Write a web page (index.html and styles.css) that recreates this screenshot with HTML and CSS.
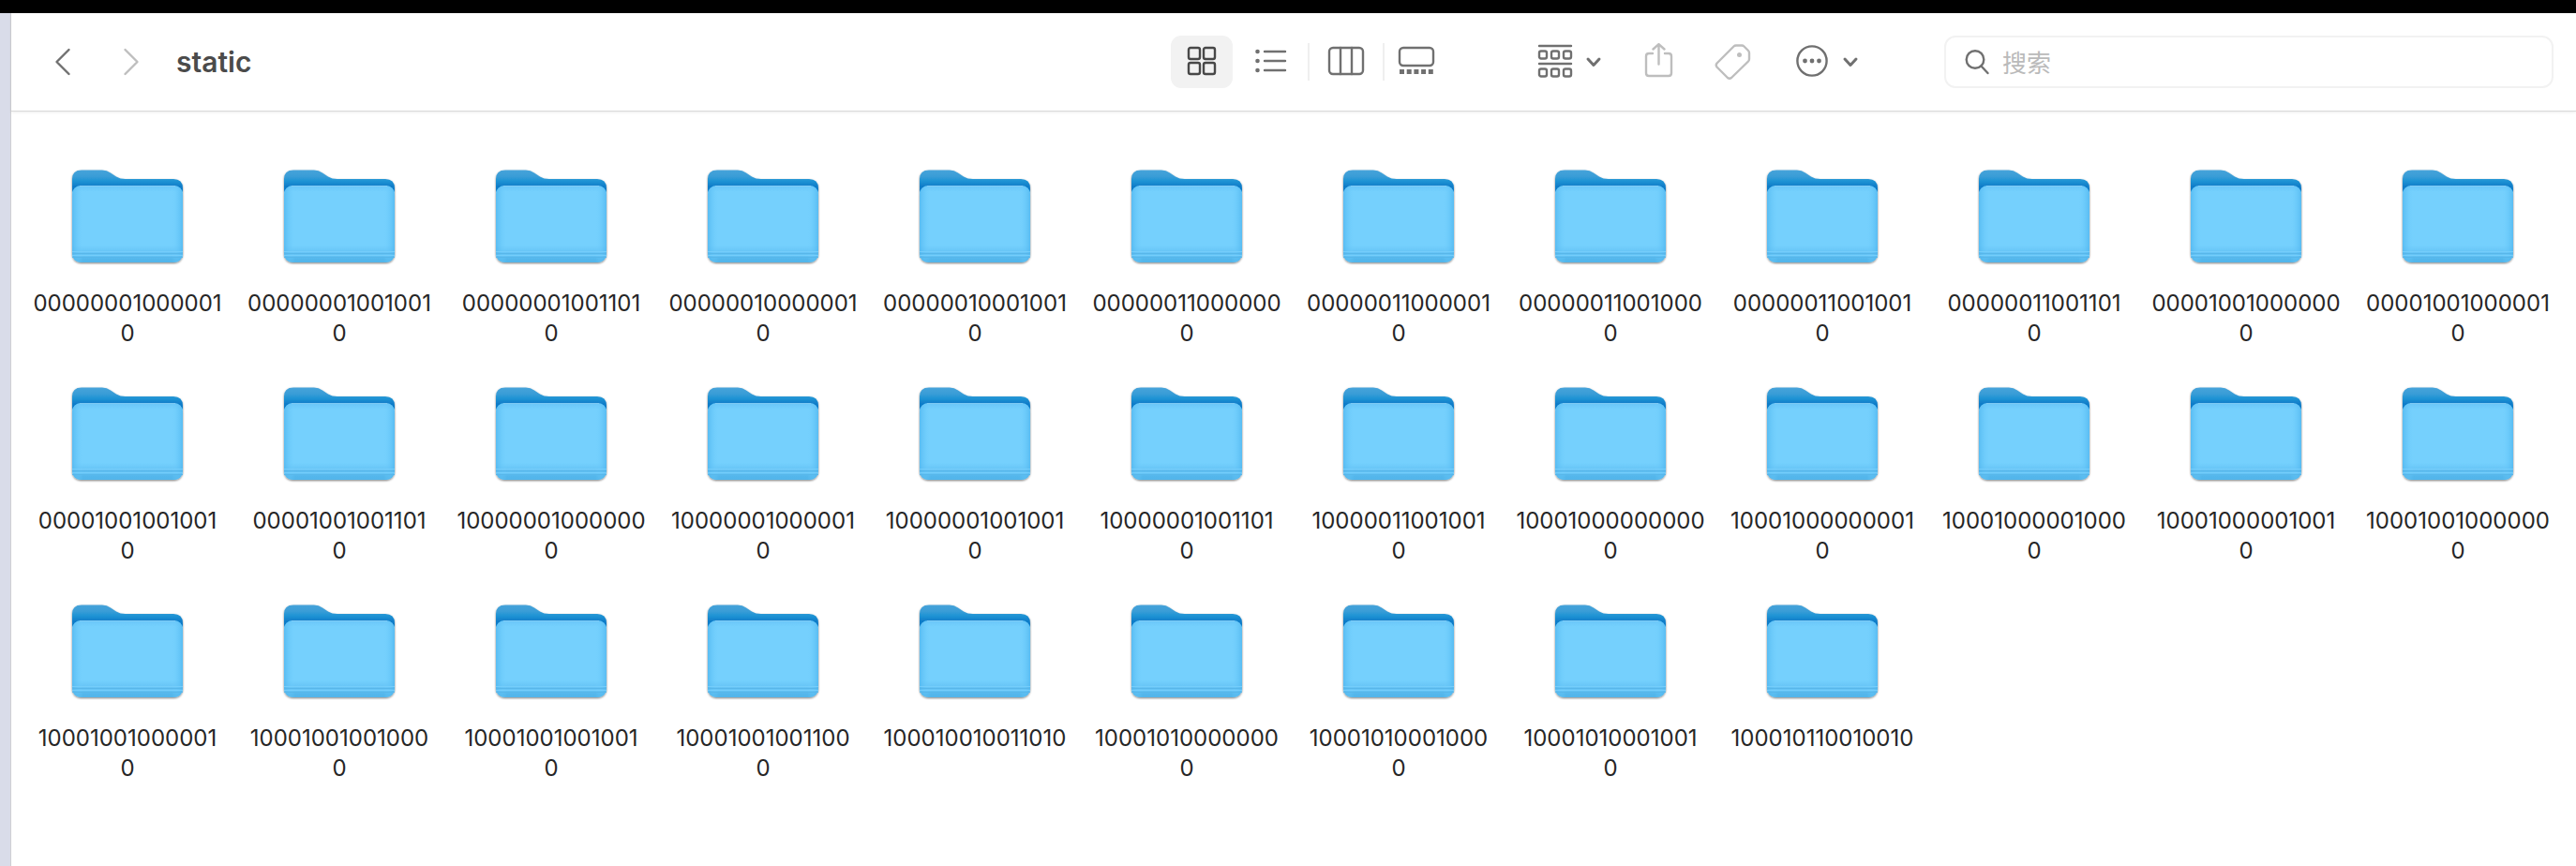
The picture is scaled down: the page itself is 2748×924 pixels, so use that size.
FILE: index.html
```html
<!DOCTYPE html>
<html lang="zh-CN">
<head>
<meta charset="utf-8">
<title>static</title>
<link rel="stylesheet" href="styles.css">
</head>
<body>
<svg class="defs" aria-hidden="true">
  <defs>
    <linearGradient id="back" x1="0" y1="0" x2="0" y2="1">
      <stop offset="0" stop-color="#46a3da"/>
      <stop offset="0.28" stop-color="#3a9dd7"/>
      <stop offset="0.5" stop-color="#1e93d4"/>
      <stop offset="0.75" stop-color="#0d7bc8"/>
      <stop offset="1" stop-color="#0d7bc8"/>
    </linearGradient>
    <linearGradient id="edge" x1="0" y1="0" x2="1" y2="0">
      <stop offset="0" stop-color="#4db4ee" stop-opacity="0.7"/>
      <stop offset="0.04" stop-color="#5fc2f6" stop-opacity="0.5"/>
      <stop offset="0.1" stop-color="#74d0fd" stop-opacity="0"/>
      <stop offset="0.9" stop-color="#74d0fd" stop-opacity="0"/>
      <stop offset="0.96" stop-color="#5fc2f6" stop-opacity="0.5"/>
      <stop offset="1" stop-color="#4db4ee" stop-opacity="0.7"/>
    </linearGradient>
    <linearGradient id="front" x1="0" y1="0" x2="0" y2="1">
      <stop offset="0" stop-color="#6ac6f8"/>
      <stop offset="0.08" stop-color="#74d0fd"/>
      <stop offset="0.78" stop-color="#74d0fd"/>
      <stop offset="0.85" stop-color="#69c6f7"/>
      <stop offset="0.93" stop-color="#60c0f3"/>
      <stop offset="0.95" stop-color="#54b7ec"/>
      <stop offset="1" stop-color="#52b5ea"/>
    </linearGradient>
    <filter id="shade" x="-10%" y="-10%" width="120%" height="120%">
      <feDropShadow dx="0" dy="1" stdDeviation="1" flood-color="#000" flood-opacity="0.5"/>
    </filter>
  </defs>
  <symbol id="folder" viewBox="0 0 130 112">
    <g filter="url(#shade)">
      <path fill="url(#back)" d="M6 30V16Q6 6.500 16 6.500H38Q43 6.500 47 9.500L53 13.500Q57 16 63 16H114Q124 16 124 26V30Z"/>
      <rect fill="url(#front)" x="6" y="23" width="118" height="82" rx="9"/>
    </g>
    <rect fill="url(#edge)" x="6" y="23" width="118" height="82" rx="9"/>
    <path d="M14 23.500H116" stroke="#7fcaf5" stroke-width="1"/>
    <path d="M6 93.500H124M6 97.500H124" stroke="#75cdfa" stroke-width="1"/>
    <path d="M6 95.500H124M6 99.500H124" stroke="#58b6e9" stroke-width="1"/>
  </symbol>
  <symbol id="down" viewBox="0 0 20 20">
    <path d="M4 7L10 13.500L16 7" fill="none" stroke="currentColor" stroke-width="3" stroke-linecap="round" stroke-linejoin="round"/>
  </symbol>
</svg>

<div class="desktop">
  <main class="window">
    <header class="toolbar">
      <nav class="history">
        <button class="tool back" aria-label="后退"><svg width="20" height="32" viewBox="0 0 20 32"><path d="M16.500 3L3.500 16L16.500 29"/></svg></button>
        <button class="tool faint" aria-label="前进"><svg width="20" height="32" viewBox="0 0 20 32"><path d="M3.500 3L16.500 16L3.500 29"/></svg></button>
      </nav>
      <h1 class="title">static</h1>
      <div class="views">
        <button class="view active" aria-label="图标"><svg width="40" height="40" viewBox="0 0 40 40"><rect x="6" y="5" width="12" height="12" rx="2"/><rect x="22" y="5" width="12" height="12" rx="2"/><rect x="6" y="21" width="12" height="12" rx="2"/><rect x="22" y="21" width="12" height="12" rx="2"/></svg></button>
        <button class="view wide" aria-label="列表"><svg width="40" height="40" viewBox="0 0 40 40"><path d="M13 9H35M13 19H35M13 29H35"/><g class="solid"><circle cx="5.500" cy="9" r="2.300"/><circle cx="5.500" cy="19" r="2.300"/><circle cx="5.500" cy="29" r="2.300"/></g></svg></button>
        <button class="view wide" aria-label="分栏"><svg width="40" height="40" viewBox="0 0 40 40"><rect x="2" y="5" width="36" height="28" rx="4"/><path d="M14 5V33M26 5V33"/></svg></button>
        <button class="view" aria-label="画廊"><svg width="40" height="40" viewBox="0 0 40 40"><rect x="2" y="5" width="36" height="19" rx="4"/><path class="solid" d="M2 28h5v5h-5zM9.700 28h5v5h-5zM17.400 28h5v5h-5zM25.100 28h5v5h-5zM32.800 28h5v5h-5z"/></svg></button>
      </div>
      <div class="actions">
        <button class="tool menu" aria-label="分组"><svg width="40" height="40" viewBox="0 0 40 40"><path d="M3 3H37M3 22H37"/><rect x="3" y="8.500" width="8" height="8" rx="2"/><rect x="16" y="8.500" width="8" height="8" rx="2"/><rect x="29" y="8.500" width="8" height="8" rx="2"/><rect x="3" y="27.500" width="8" height="8" rx="2"/><rect x="16" y="27.500" width="8" height="8" rx="2"/><rect x="29" y="27.500" width="8" height="8" rx="2"/></svg><svg width="20" height="20"><use href="#down"/></svg></button>
        <button class="tool faint" aria-label="共享"><svg width="40" height="40" viewBox="0 0 40 40"><path d="M14 11H10Q7 11 7 14V32Q7 35 10 35H31Q34 35 34 32V14Q34 11 31 11H27M20.500 22.500V1.200M14.500 6.500L20.500 1.200L26.500 6.500"/></svg></button>
        <button class="tool faint" aria-label="标签"><svg width="40" height="40" viewBox="0 0 40 40"><path d="M21.500 3.500Q22.500 2.500 24 2.500H30Q31.500 2.500 32.500 3.500L37 8Q38 9 38 10.500V17Q38 18.500 37 19.500L19 37Q17 38.500 15 37L3.500 25.500Q2 23.500 3.500 21.500Z"/><circle class="solid" cx="27.500" cy="12.500" r="2.500"/></svg></button>
        <button class="tool menu more" aria-label="更多"><svg width="40" height="40" viewBox="0 0 40 40"><circle cx="20" cy="19" r="15.600"/><g class="solid"><circle cx="12.500" cy="19" r="2.400"/><circle cx="20" cy="19" r="2.400"/><circle cx="27.500" cy="19" r="2.400"/></g></svg><svg width="20" height="20"><use href="#down"/></svg></button>
      </div>
      <label class="search">
        <svg width="28" height="28" viewBox="0 0 28 28" aria-hidden="true"><circle cx="12" cy="11.500" r="9.300"/><path d="M18.500 18.500L25.500 26"/></svg>
        <input class="field" type="search" placeholder="搜索" aria-label="搜索">
      </label>
    </header>

    <ul class="files">
      <li class="file"><svg class="icon"><use href="#folder"/></svg><span class="name">00000001000001<br>0</span></li>
      <li class="file"><svg class="icon"><use href="#folder"/></svg><span class="name">00000001001001<br>0</span></li>
      <li class="file"><svg class="icon"><use href="#folder"/></svg><span class="name">00000001001101<br>0</span></li>
      <li class="file"><svg class="icon"><use href="#folder"/></svg><span class="name">00000010000001<br>0</span></li>
      <li class="file"><svg class="icon"><use href="#folder"/></svg><span class="name">00000010001001<br>0</span></li>
      <li class="file"><svg class="icon"><use href="#folder"/></svg><span class="name">00000011000000<br>0</span></li>
      <li class="file"><svg class="icon"><use href="#folder"/></svg><span class="name">00000011000001<br>0</span></li>
      <li class="file"><svg class="icon"><use href="#folder"/></svg><span class="name">00000011001000<br>0</span></li>
      <li class="file"><svg class="icon"><use href="#folder"/></svg><span class="name">00000011001001<br>0</span></li>
      <li class="file"><svg class="icon"><use href="#folder"/></svg><span class="name">00000011001101<br>0</span></li>
      <li class="file"><svg class="icon"><use href="#folder"/></svg><span class="name">00001001000000<br>0</span></li>
      <li class="file"><svg class="icon"><use href="#folder"/></svg><span class="name">00001001000001<br>0</span></li>
      <li class="file"><svg class="icon"><use href="#folder"/></svg><span class="name">00001001001001<br>0</span></li>
      <li class="file"><svg class="icon"><use href="#folder"/></svg><span class="name">00001001001101<br>0</span></li>
      <li class="file"><svg class="icon"><use href="#folder"/></svg><span class="name">10000001000000<br>0</span></li>
      <li class="file"><svg class="icon"><use href="#folder"/></svg><span class="name">10000001000001<br>0</span></li>
      <li class="file"><svg class="icon"><use href="#folder"/></svg><span class="name">10000001001001<br>0</span></li>
      <li class="file"><svg class="icon"><use href="#folder"/></svg><span class="name">10000001001101<br>0</span></li>
      <li class="file"><svg class="icon"><use href="#folder"/></svg><span class="name">10000011001001<br>0</span></li>
      <li class="file"><svg class="icon"><use href="#folder"/></svg><span class="name">10001000000000<br>0</span></li>
      <li class="file"><svg class="icon"><use href="#folder"/></svg><span class="name">10001000000001<br>0</span></li>
      <li class="file"><svg class="icon"><use href="#folder"/></svg><span class="name">10001000001000<br>0</span></li>
      <li class="file"><svg class="icon"><use href="#folder"/></svg><span class="name">10001000001001<br>0</span></li>
      <li class="file"><svg class="icon"><use href="#folder"/></svg><span class="name">10001001000000<br>0</span></li>
      <li class="file"><svg class="icon"><use href="#folder"/></svg><span class="name">10001001000001<br>0</span></li>
      <li class="file"><svg class="icon"><use href="#folder"/></svg><span class="name">10001001001000<br>0</span></li>
      <li class="file"><svg class="icon"><use href="#folder"/></svg><span class="name">10001001001001<br>0</span></li>
      <li class="file"><svg class="icon"><use href="#folder"/></svg><span class="name">10001001001100<br>0</span></li>
      <li class="file"><svg class="icon"><use href="#folder"/></svg><span class="name">100010010011010</span></li>
      <li class="file"><svg class="icon"><use href="#folder"/></svg><span class="name">10001010000000<br>0</span></li>
      <li class="file"><svg class="icon"><use href="#folder"/></svg><span class="name">10001010001000<br>0</span></li>
      <li class="file"><svg class="icon"><use href="#folder"/></svg><span class="name">10001010001001<br>0</span></li>
      <li class="file"><svg class="icon"><use href="#folder"/></svg><span class="name">100010110010010</span></li>
    </ul>
  </main>
</div>
</body>
</html>
```
FILE: styles.css
```css
* {
  box-sizing: border-box;
}

body {
  margin: 0;
  background: #fff;
  color: #262626;
  font-family: Inter, "Noto Sans CJK SC", sans-serif;
}

.defs {
  position: absolute;
  width: 0;
  height: 0;
}

.desktop {
  min-height: 100vh;
  padding-left: 11px;
  border-top: 14px solid #000;
  background: #d9dce9;
  display: flex;
}

.window {
  flex: 1;
  min-width: 0;
  border-left: 1px solid #cfcfd2;
  background: #fff;
}

/* Toolbar */
.toolbar {
  display: flex;
  align-items: center;
  height: 105px;
  padding: 0 24px 0 45px;
  border-bottom: 1px solid #d9d9d9;
  box-shadow: 0 1px 3px rgba(0, 0, 0, 0.08);
}

.toolbar svg {
  flex: none;
  fill: none;
  stroke: currentColor;
  stroke-width: 2.4;
  stroke-linecap: round;
  stroke-linejoin: round;
}

.toolbar .solid {
  fill: currentColor;
  stroke: none;
}

.tool,
.view {
  display: flex;
  align-items: center;
  justify-content: center;
  padding: 0;
  border: 0;
  background: none;
  color: #707070;
}

.tool.faint {
  color: #bebebe;
}

.history {
  display: flex;
  gap: 53px;
}

.title {
  margin: 0 auto 0 38px;
  color: #4b4b4b;
  font-size: 30px;
  line-height: 36px;
  font-weight: 600;
}

.views {
  display: flex;
  align-items: center;
  margin-right: 94px;
}

.view {
  width: 68px;
  height: 40px;
}

.view.wide {
  width: 80px;
  border-right: 2px solid #efefef;
}

.view.active {
  width: 66px;
  height: 56px;
  margin-right: 2px;
  border-radius: 11px;
  background: #f2f2f2;
  color: #484848;
}

.actions {
  display: flex;
  align-items: center;
  gap: 39px;
  margin-right: 90px;
}

.menu {
  gap: 11px;
}

.more {
  margin-left: 6px;
}

.search {
  flex: 0 1 650px;
  display: flex;
  align-items: center;
  gap: 13px;
  height: 56px;
  padding: 0 19px;
  border: 2px solid #f2f2f2;
  border-radius: 12px;
  color: #707070;
}

.field {
  flex: 1;
  min-width: 0;
  padding: 4px 0 0;
  border: 0;
  outline: 0;
  background: none;
  color: #262626;
  font: inherit;
  font-size: 26px;
  line-height: 36px;
}

.field::placeholder {
  color: #bababa;
}

/* Folder grid */
.files {
  display: grid;
  grid-template-columns: repeat(auto-fill, minmax(220px, 1fr));
  row-gap: 35px;
  margin: 0;
  padding: 56px 13px 35px 11px;
  list-style: none;
}

.file {
  display: flex;
  flex-direction: column;
  align-items: center;
  gap: 21px;
}

.icon {
  width: 130px;
  height: 112px;
}

.name {
  font-size: 24px;
  line-height: 32px;
  text-align: center;
}
```
